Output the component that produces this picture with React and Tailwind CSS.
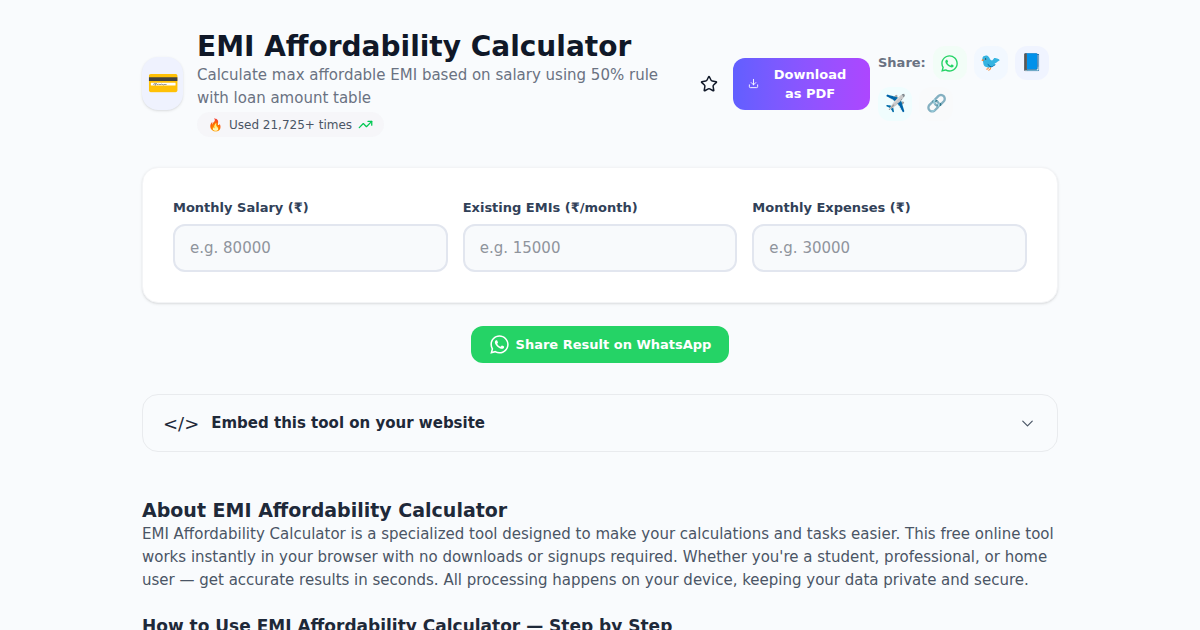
import { useState } from 'react'
import { Star, TrendingUp, Download, ChevronDown } from 'lucide-react'
import { FaWhatsapp } from 'react-icons/fa'

const fields = [
  { id: 'salary', label: 'Monthly Salary (₹)', placeholder: 'e.g. 80000' },
  { id: 'emis', label: 'Existing EMIs (₹/month)', placeholder: 'e.g. 15000' },
  { id: 'expenses', label: 'Monthly Expenses (₹)', placeholder: 'e.g. 30000' },
]

const shareLinks = [
  { name: 'WhatsApp', icon: <FaWhatsapp size={19} />, style: 'bg-green-50/70 text-[#25d366]' },
  { name: 'Twitter', icon: '🐦', style: 'bg-blue-50/70' },
  { name: 'Facebook', icon: '📘', style: 'bg-indigo-50/80' },
  { name: 'Telegram', icon: '✈️', style: 'bg-cyan-50/70' },
  { name: 'Copy link', icon: '🔗', style: 'bg-gray-50' },
]

function Header() {
  return (
    <header className="flex items-center justify-between gap-4">
      <div className="flex items-center gap-[14px]">
        <div className="flex h-[53px] w-[41px] shrink-0 items-center justify-center rounded-2xl bg-[#eff2fe] text-[26px] shadow-sm">
          💳
        </div>
        <div>
          <h1 className="text-[28px] leading-[34px] font-bold text-gray-900">EMI Affordability Calculator</h1>
          <p className="text-[15px] leading-[23px] text-gray-500">
            Calculate max affordable EMI based on salary using 50% rule with loan amount table
          </p>
          <span className="mt-[2px] inline-flex h-[25px] items-center gap-[6px] rounded-full bg-gray-100/60 px-[11px] align-top text-[12px] text-gray-600">
            <span>🔥</span>
            Used 21,725+ times
            <TrendingUp size={15} className="text-green-500" />
          </span>
        </div>
      </div>

      <div className="flex shrink-0 items-center">
        <button type="button" aria-label="Add to favourites" className="mr-[15px] text-gray-900">
          <Star size={18} />
        </button>
        <button
          type="button"
          className="mr-2 flex w-[137px] items-center rounded-xl bg-gradient-to-r from-[#615fff] to-[#ad46ff] px-[15px] py-[7px] text-[13px] leading-[19px] font-semibold text-white"
        >
          <Download size={11} className="shrink-0" />
          <span className="flex-1 pl-[6px] text-center">Download as PDF</span>
        </button>
        <div className="flex w-[180px] flex-wrap items-center gap-[7px]">
          <span className="text-[13px] font-semibold text-gray-500">Share:</span>
          {shareLinks.map((link) => (
            <a
              key={link.name}
              href="#share"
              aria-label={link.name}
              className={`flex h-[34px] w-[34px] items-center justify-center rounded-xl text-[17px] ${link.style}`}
            >
              {link.icon}
            </a>
          ))}
        </div>
      </div>
    </header>
  )
}

function App() {
  const [values, setValues] = useState({ salary: '', emis: '', expenses: '' })

  return (
    <div className="min-h-screen bg-[#f9fbfd] font-['DejaVu_Sans',sans-serif]">
      <main className="mx-auto max-w-[960px] px-[22px] pt-[30px]">
        <Header />

        {/* Calculator inputs */}
        <section className="mt-[30px] grid grid-cols-3 gap-[15px] rounded-2xl border border-gray-100 bg-white p-[30px] shadow-sm">
          {fields.map((field) => (
            <div key={field.id}>
              <label htmlFor={field.id} className="mb-[7px] block text-[13px] leading-[19px] font-semibold text-slate-700">
                {field.label}
              </label>
              <input
                id={field.id}
                type="text"
                inputMode="numeric"
                placeholder={field.placeholder}
                value={values[field.id]}
                onChange={(e) => setValues({ ...values, [field.id]: e.target.value })}
                className="h-12 w-full rounded-xl border-2 border-[#e2e6ef] bg-slate-50 px-[15px] text-[15px] placeholder:text-[#8f949c]"
              />
            </div>
          ))}
        </section>

        <div className="mt-[23px] flex justify-center">
          <button
            type="button"
            className="flex h-[37px] items-center gap-[6px] rounded-xl bg-[#25d366] px-[18px] text-[13px] font-semibold text-white"
          >
            <FaWhatsapp size={21} />
            Share Result on WhatsApp
          </button>
        </div>

        {/* Embed panel */}
        <button
          type="button"
          className="mt-[31px] flex h-[58px] w-full items-center rounded-2xl border border-[#e9ebee] px-5 text-left text-gray-800"
        >
          <span className="mr-3 text-[18px]">&lt;/&gt;</span>
          <span className="flex-1 text-[15px] font-semibold">Embed this tool on your website</span>
          <ChevronDown size={19} strokeWidth={1.5} className="text-gray-600" />
        </button>

        <section className="mt-[45px]">
          <h2 className="text-[19px] leading-[26px] font-bold text-gray-800">About EMI Affordability Calculator</h2>
          <p className="text-[15px] leading-[23px] text-gray-600">
            EMI Affordability Calculator is a specialized tool designed to make your calculations and tasks easier.
            This free online tool works instantly in your browser with no downloads or signups required. Whether
            you're a student, professional, or home user — get accurate results in seconds. All processing happens
            on your device, keeping your data private and secure.
          </p>
          <h3 className="mt-[21px] text-[17px] leading-[26px] font-bold text-gray-800">
            How to Use EMI Affordability Calculator — Step by Step
          </h3>
        </section>
      </main>
    </div>
  )
}

export default App
